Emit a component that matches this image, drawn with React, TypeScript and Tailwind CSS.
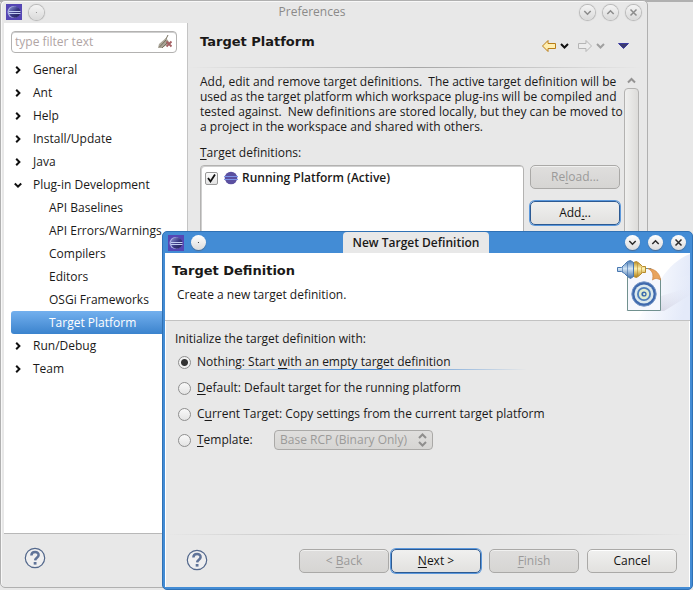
import type { ReactNode } from "react";

function EclipseIcon() {
  return (
    <svg width="16" height="16" viewBox="0 0 16 16" className="shrink-0" aria-hidden="true">
      <defs>
        <linearGradient id="ecl" x1="0" y1="0" x2="1" y2="1">
          <stop offset="0" stopColor="#8f9ad6" />
          <stop offset="0.5" stopColor="#3b3a86" />
          <stop offset="1" stopColor="#1f1c50" />
        </linearGradient>
      </defs>
      <rect width="16" height="16" fill="#5546b4" />
      <circle cx="7.5" cy="8" r="6" fill="#aab0e2" />
      <circle cx="8.6" cy="8" r="5.8" fill="url(#ecl)" />
      <path d="M3 7.5h11.5M3 9.5h11.5" stroke="#c3cdf2" strokeWidth="1" />
    </svg>
  );
}

function OrbButton({ kind, label, active }: { kind: "menu" | "down" | "up" | "close"; label: string; active?: boolean }) {
  const ink = active ? "#2b2b2b" : "#8c8c8c";
  return (
    <button
      type="button"
      aria-label={label}
      className={
        "flex size-[15px] shrink-0 items-center justify-center rounded-full bg-linear-to-b " +
        (active
          ? "from-white to-[#dcdcdc] shadow-[0_1px_1px_0_#4a6c94]"
          : "from-[#f4f4f4] to-[#dadada] shadow-[0_0_1px_1px_#b4b4b4]")
      }
    >
      <svg width="15" height="15" viewBox="0 0 15 15" fill="none" stroke={ink} strokeWidth="1.5">
        {kind === "menu" && <circle cx="7.5" cy="7.5" r="0.6" fill={ink} stroke="none" />}
        {kind === "down" && <path d="M4.3 6L7.5 9.2L10.7 6" />}
        {kind === "up" && <path d="M4.3 9L7.5 5.8L10.7 9" />}
        {kind === "close" && <path d="M4.5 4.5L10.5 10.5M10.5 4.5L4.5 10.5" />}
      </svg>
    </button>
  );
}

function Chevron({ open }: { open?: boolean }) {
  return (
    <svg width="8" height="8" viewBox="0 0 8 8" fill="none" stroke="#111" strokeWidth="2" className="shrink-0" aria-hidden="true">
      {open ? <path d="M0.8 2.5L4 5.7L7.2 2.5" /> : <path d="M2.2 0.8L5.4 4L2.2 7.2" />}
    </svg>
  );
}

function Key({ children }: { children: ReactNode }) {
  return <span className="underline decoration-1 underline-offset-2 [text-decoration-skip-ink:none]">{children}</span>;
}

function PushButton({ children, disabled, focused }: { children: ReactNode; disabled?: boolean; focused?: boolean }) {
  return (
    <button
      type="button"
      disabled={disabled}
      className={
        "h-6 w-[90px] shrink-0 rounded-[5px] border bg-linear-to-b leading-4 " +
        (disabled
          ? "border-[#aaa9a7] from-[#dfdedd] to-[#d6d5d3] text-[#9b9a99] shadow-[inset_0_1px_0_#f1f1f0]"
          : focused
            ? "border-[#2d5a92] from-[#f0f0ef] to-[#e2e1df] text-[#141312] shadow-[0_0_0_1px_#5b98dc]"
            : "border-[#aaa9a7] from-[#f0f0ef] to-[#e2e1df] text-[#141312] shadow-[inset_0_1px_0_#fff]")
      }
    >
      {children}
    </button>
  );
}

function HelpButton() {
  return (
    <button type="button" aria-label="Help" className="size-[22px] shrink-0">
      <svg width="22" height="22" viewBox="0 0 22 22" fill="none">
        <circle cx="11" cy="11" r="9.7" fill="#efeff0" stroke="#53688c" strokeWidth="1.2" />
        <path d="M7.4 8.5C7.4 3.8 14.8 3.8 14.6 8.1C14.5 10.7 11.2 10.6 11.1 13.4" stroke="#5f7398" strokeWidth="2.5" />
        <rect x="9.7" y="15" width="2.8" height="2.6" fill="#5f7398" />
      </svg>
    </button>
  );
}

function TargetBanner() {
  return (
    <svg width="76" height="67" viewBox="0 0 76 67" className="shrink-0" aria-hidden="true">
      <defs>
        <linearGradient id="swoosh" x1="0" y1="0" x2="1" y2="0.2">
          <stop offset="0" stopColor="#ffffff" />
          <stop offset="1" stopColor="#e4eaf9" />
        </linearGradient>
        <linearGradient id="shade" x1="0" y1="1" x2="1" y2="0">
          <stop offset="0" stopColor="#aaa3b8" />
          <stop offset="1" stopColor="#e6e9f8" stopOpacity="0" />
        </linearGradient>
        <linearGradient id="blue" x1="0" y1="0" x2="0" y2="1">
          <stop offset="0" stopColor="#4779b3" />
          <stop offset="0.45" stopColor="#d2e5f5" />
          <stop offset="1" stopColor="#3d6da8" />
        </linearGradient>
        <linearGradient id="gold" x1="0" y1="0" x2="0" y2="1">
          <stop offset="0" stopColor="#b78a22" />
          <stop offset="0.45" stopColor="#fff2b0" />
          <stop offset="1" stopColor="#b28114" />
        </linearGradient>
      </defs>
      <path d="M30 67C38 35 53 10 76 1V67Z" fill="url(#swoosh)" />
      <path d="M24 67C42 34 58 25 76 22V67Z" fill="url(#swoosh)" opacity="0.7" />
      <path d="M12 58H50L76 42V34L47 43Z" fill="url(#shade)" opacity="0.6" />
      <path d="M13.5 15.5H37L46.5 26V57.5H13.5Z" fill="#f6f7fd" stroke="#71918f" />
      <path d="M37 16C42 17 46 21 46.5 27C43 25 41 25 38.5 27C39.5 22 39 18 34 15.5Z" fill="#e8a35d" stroke="#cf823d" strokeWidth="0.7" />
      <circle cx="30" cy="41" r="12.2" fill="#3f69ad" stroke="#7898c8" />
      <circle cx="30" cy="41" r="9.6" fill="#dce9ee" />
      <circle cx="30" cy="41" r="7" fill="#4f7ebb" />
      <circle cx="30" cy="41" r="5.2" fill="#dfeccf" />
      <circle cx="30" cy="41" r="2.6" fill="#386aae" />
      <circle cx="30.2" cy="41.2" r="1.1" fill="#edf5cf" />
      <path d="M19.5 9.5L22.5 8.5L25.5 10.5L28.5 13.5H31.5V19.5H28.5L25.5 22.5L22.5 24.5L19.5 23.5Z" fill="url(#gold)" stroke="#b78a2c" />
      <path d="M23.5 10V23M27.5 14V20" stroke="#b78a2c" strokeOpacity="0.6" />
      <path d="M3.5 14.5H7.5L10.5 11.5L13.5 8.5L16.5 7.5L19.5 9.5V23.5L16.5 25.5L13.5 23.5L10.5 20.5L7.5 18.5H3.5Z" fill="url(#blue)" stroke="#4877b0" />
      <path d="M8.5 14V19M13.5 10V23" stroke="#3f6da6" strokeOpacity="0.6" />
    </svg>
  );
}

const treeItems = [
  { name: "General" },
  { name: "Ant" },
  { name: "Help" },
  { name: "Install/Update" },
  { name: "Java" },
  {
    name: "Plug-in Development",
    children: ["API Baselines", "API Errors/Warnings", "Compilers", "Editors", "OSGi Frameworks", "Target Platform"],
  },
  { name: "Run/Debug" },
  { name: "Team" },
];

function Sidebar() {
  return (
    <nav className="w-[184px] shrink-0 border-r border-[#c4c4c4] bg-white px-[7px] pt-2">
      <div className="flex h-[22px] w-[166px] items-center rounded-[4px] border border-[#b3b2b1] px-[3px] shadow-[inset_0_1px_0_#cfcfcf]">
        <input
          type="text"
          aria-label="Filter"
          placeholder="type filter text"
          className="w-full min-w-0 bg-transparent outline-none placeholder:text-[#b0a5a5]"
        />
        <button type="button" aria-label="Clear filter" className="shrink-0">
          <svg width="16" height="16" viewBox="0 0 16 16">
            <path d="M1 14L2 10L9 4L13 9L5 14Z" fill="#aaa598" />
            <path d="M9 5L11 1M2.5 13L9 6M5 14L11 8" stroke="#77705f" strokeWidth="1" />
            <path d="M9.5 7.5L14.5 12.5M14.5 7.5L9.5 12.5" stroke="#a35f62" strokeWidth="1.8" />
          </svg>
        </button>
      </div>
      <ul className="mt-[5px]">
        {treeItems.map((item) => (
          <li key={item.name}>
            <div className="flex h-[23px] items-center gap-[11px] pl-[3px]">
              <Chevron open={!!item.children} />
              <span>{item.name}</span>
            </div>
            {item.children && (
              <ul>
                {item.children.map((child) => (
                  <li
                    key={child}
                    className={
                      "flex h-[23px] items-center rounded-[3px] pl-[38px] " +
                      (child === "Target Platform" ? "bg-linear-to-b from-[#73b0ee] to-[#3a83cd] text-white" : "")
                    }
                  >
                    {child}
                  </li>
                ))}
              </ul>
            )}
          </li>
        ))}
      </ul>
    </nav>
  );
}

function HistoryToolbar() {
  return (
    <div className="flex items-center pt-[2px]" role="toolbar" aria-label="History">
      <button type="button" aria-label="Back">
        <svg width="16" height="14" viewBox="0 0 16 14">
          <path d="M1.5 7L7 1.5V4.5H14.5V9.5H7V12.5Z" fill="#ffeeb0" stroke="#b97d17" />
        </svg>
      </button>
      <button type="button" aria-label="Back history" className="ml-[3px]">
        <svg width="9" height="8" viewBox="0 0 9 8" fill="none" stroke="#111" strokeWidth="2">
          <path d="M1 2L4.5 5.5L8 2" />
        </svg>
      </button>
      <button type="button" aria-label="Forward" className="ml-2">
        <svg width="16" height="14" viewBox="0 0 16 14">
          <path d="M14.5 7L9 1.5V4.5H1.5V9.5H9V12.5Z" fill="#ececec" stroke="#b5b5b5" />
        </svg>
      </button>
      <button type="button" aria-label="Forward history" className="ml-[3px]">
        <svg width="9" height="8" viewBox="0 0 9 8" fill="none" stroke="#a0a0a0" strokeWidth="2">
          <path d="M1 2L4.5 5.5L8 2" />
        </svg>
      </button>
      <button type="button" aria-label="View menu" className="ml-[13px]">
        <svg width="11" height="6" viewBox="0 0 11 6">
          <path d="M0.5 0.5H10.5L5.5 5.5Z" fill="#3c3c6c" stroke="#25259a" strokeWidth="0.8" />
        </svg>
      </button>
    </div>
  );
}

function PreferencesWindow() {
  return (
    <section
      aria-label="Preferences"
      className="absolute top-0 right-[45px] bottom-[2px] left-0 flex flex-col overflow-hidden rounded-[5px] border border-[#b0b0b0] bg-[#e8e8e8] pl-[3px] shadow-[inset_1px_1px_0_#f8f8f8]"
    >
      <header className="flex h-[22px] shrink-0 items-center pr-[6px] pl-[2px]">
        <EclipseIcon />
        <div className="ml-[7px]">
          <OrbButton kind="menu" label="Window menu" />
        </div>
        <h1 className="flex-1 text-center text-[#8b8a89]">Preferences</h1>
        <div className="flex gap-2">
          <OrbButton kind="down" label="Minimize" />
          <OrbButton kind="up" label="Maximize" />
          <OrbButton kind="close" label="Close" />
        </div>
      </header>
      <div className="flex min-h-0 flex-1">
        <Sidebar />
        <main className="flex min-w-0 flex-1 flex-col">
          <div className="flex h-11 shrink-0 items-center justify-between pr-[18px] pl-3">
            <h2 className="pb-[6px] font-['DejaVu_Sans',sans-serif] text-[13px] font-bold">Target Platform</h2>
            <HistoryToolbar />
          </div>
          <div className="mr-[5px] h-px shrink-0 bg-linear-to-r from-transparent via-[#a6a6a6] to-transparent" />
          <div className="flex min-h-0 flex-1 pr-2 pl-3">
            <div className="min-w-0 flex-1 pt-[6px]">
              <p className="-mr-1 leading-[15px] whitespace-pre-wrap">
                {"Add, edit and remove target definitions.  The active target definition will be used as the target platform which workspace plug-ins will be compiled and tested against.  New definitions are stored locally, but they can be moved to a project in the workspace and shared with others."}
              </p>
              <p className="mt-[11px]">
                <Key>T</Key>arget definitions:
              </p>
              <div className="mt-1 flex gap-[6px]">
                <div className="h-[300px] min-w-0 flex-1 rounded-[4px] border border-[#b3b2b1] bg-white px-1 pt-1 shadow-[inset_1px_1px_0_#cfcfcf]">
                  <label className="flex h-4 items-center font-semibold">
                    <input type="checkbox" defaultChecked className="peer sr-only" />
                    <span className="flex size-[13px] items-center justify-center rounded-[2px] border border-[#999] bg-linear-to-b from-[#fbfbfb] to-[#e3e3e3]">
                      <svg width="11" height="11" viewBox="0 0 11 11" fill="none" stroke="#111" strokeWidth="1.8">
                        <path d="M2 5L4.5 8.5L9 1.5" />
                      </svg>
                    </span>
                    <svg width="16" height="14" viewBox="0 0 16 14" className="mr-[3px] ml-[5px]">
                      <circle cx="8" cy="7" r="6.3" fill="#5b50a0" />
                      <path d="M1 5.5H15M1 8.5H15" stroke="#7b93e8" />
                    </svg>
                    Running Platform (Active)
                  </label>
                </div>
                <div className="flex flex-col gap-3">
                  <PushButton disabled>
                    Re<Key>l</Key>oad...
                  </PushButton>
                  <PushButton focused>
                    Add<Key>.</Key>..
                  </PushButton>
                </div>
              </div>
            </div>
            <div className="ml-1 flex w-[15px] flex-col items-center pt-[9px]">
              <svg width="9" height="7" viewBox="0 0 9 7" fill="none" stroke="#949393" strokeWidth="2" className="mb-1 shrink-0">
                <path d="M1 5.5L4.5 2L8 5.5" />
              </svg>
              <div className="w-full flex-1 rounded-[4px] border border-[#b3b2b1] bg-linear-to-r from-[#f0f0ef] to-[#dddcda]" />
            </div>
          </div>
        </main>
      </div>
      <footer className="flex h-[54px] shrink-0 items-center border-t border-[#b8b8b8] pb-[6px] pl-5">
        <HelpButton />
      </footer>
    </section>
  );
}

function Choice({ children, checked, id }: { children: ReactNode; checked?: boolean; id: string }) {
  return (
    <div className="flex h-[26px] items-center">
      <input
        id={id}
        type="radio"
        name="initialize"
        defaultChecked={checked}
        className="mr-[6px] size-[13px] shrink-0 appearance-none rounded-full border border-[#8f8f8f] bg-linear-to-b from-[#f9f9f9] to-[#e4e4e4] checked:bg-[radial-gradient(circle,#333_0_3px,#f2f2f2_4px)]"
      />
      <label htmlFor={id} className="relative">
        {children}
        {checked && (
          <span className="absolute -right-[76px] bottom-0 left-0 h-px bg-linear-to-r from-transparent via-[#2f7cd0] to-transparent" />
        )}
      </label>
    </div>
  );
}

function TargetDialog() {
  return (
    <section
      aria-label="New Target Definition"
      className="absolute top-[231px] right-0 bottom-0 left-[162px] flex flex-col overflow-hidden rounded-[5px] border border-[#2f71b5] bg-[#438cd5] px-[2px] pb-[2px]"
    >
      <header className="flex h-[21px] shrink-0 items-center pr-[4px] pl-[3px]">
        <EclipseIcon />
        <div className="ml-[7px] mr-px">
          <OrbButton kind="menu" label="Dialog menu" active />
        </div>
        <div className="flex flex-1 justify-center self-stretch">
          <h1 className="rounded-t-[4px] bg-[#e8e8e8] px-[10px] pt-[3px] font-semibold">New Target Definition</h1>
        </div>
        <div className="flex gap-2">
          <OrbButton kind="down" label="Minimize dialog" active />
          <OrbButton kind="up" label="Maximize dialog" active />
          <OrbButton kind="close" label="Close dialog" active />
        </div>
      </header>
      <div className="flex h-[68px] shrink-0 justify-between border-b border-[#c2c2c2] bg-white pl-[7px]">
        <div className="pt-[10px]">
          <h2 className="font-['DejaVu_Sans',sans-serif] text-[13px] leading-4 font-bold">Target Definition</h2>
          <p className="mt-2 pl-[5px]">Create a new target definition.</p>
        </div>
        <TargetBanner />
      </div>
      <form className="flex min-h-0 flex-1 flex-col border-x border-white bg-[#e8e8e8]">
        <fieldset className="flex-1 px-[9px]">
          <legend className="mb-[2px] pt-[10px]">Initialize the target definition with:</legend>
          <div className="pl-[3px]">
            <Choice id="nothing" checked>
              Nothing: Start <Key>w</Key>ith an empty target definition
            </Choice>
            <Choice id="default">
              <Key>D</Key>efault: Default target for the running platform
            </Choice>
            <Choice id="current">
              C<Key>u</Key>rrent Target: Copy settings from the current target platform
            </Choice>
            <div className="flex items-center">
              <div className="w-24">
                <Choice id="template">
                  <Key>T</Key>emplate:
                </Choice>
              </div>
              <div className="relative">
                <select
                  disabled
                  aria-label="Template"
                  className="h-5 w-[159px] appearance-none rounded-[4px] border border-[#aaa9a7] bg-linear-to-b from-[#dfdedd] to-[#d6d5d3] pl-[5px] leading-4 text-[#9b9a99] opacity-100"
                >
                  <option>Base RCP (Binary Only)</option>
                </select>
                <svg
                  width="9"
                  height="14"
                  viewBox="0 0 9 14"
                  fill="none"
                  stroke="#8f8e8d"
                  strokeWidth="2"
                  className="pointer-events-none absolute top-[3px] right-[6px]"
                >
                  <path d="M1 5L4.5 1.5L8 5M1 9L4.5 12.5L8 9" />
                </svg>
              </div>
            </div>
          </div>
        </fieldset>
        <div className="h-px shrink-0 bg-linear-to-r from-transparent via-[#a6a6a6] to-transparent" />
        <footer className="flex h-[52px] shrink-0 items-center pr-3 pl-5">
          <div className="flex pb-[3px]">
            <HelpButton />
          </div>
          <div className="ml-auto flex items-center">
            <PushButton disabled>
              &lt; <Key>B</Key>ack
            </PushButton>
            <div className="mr-2 ml-[2px] flex">
              <PushButton focused>
                <Key>N</Key>ext &gt;
              </PushButton>
            </div>
            <div className="mr-2 flex">
              <PushButton disabled>
                <Key>F</Key>inish
              </PushButton>
            </div>
            <PushButton>Cancel</PushButton>
          </div>
        </footer>
      </form>
    </section>
  );
}

export default function App() {
  return (
    <div className="relative h-screen min-h-[590px] overflow-hidden bg-[#e8e8e8] font-['Open_Sans','Noto_Sans',sans-serif] text-[12px] leading-4 text-[#1a1918] shadow-[inset_0_2px_0_#b0b0b0]">
      <PreferencesWindow />
      <TargetDialog />
    </div>
  );
}
